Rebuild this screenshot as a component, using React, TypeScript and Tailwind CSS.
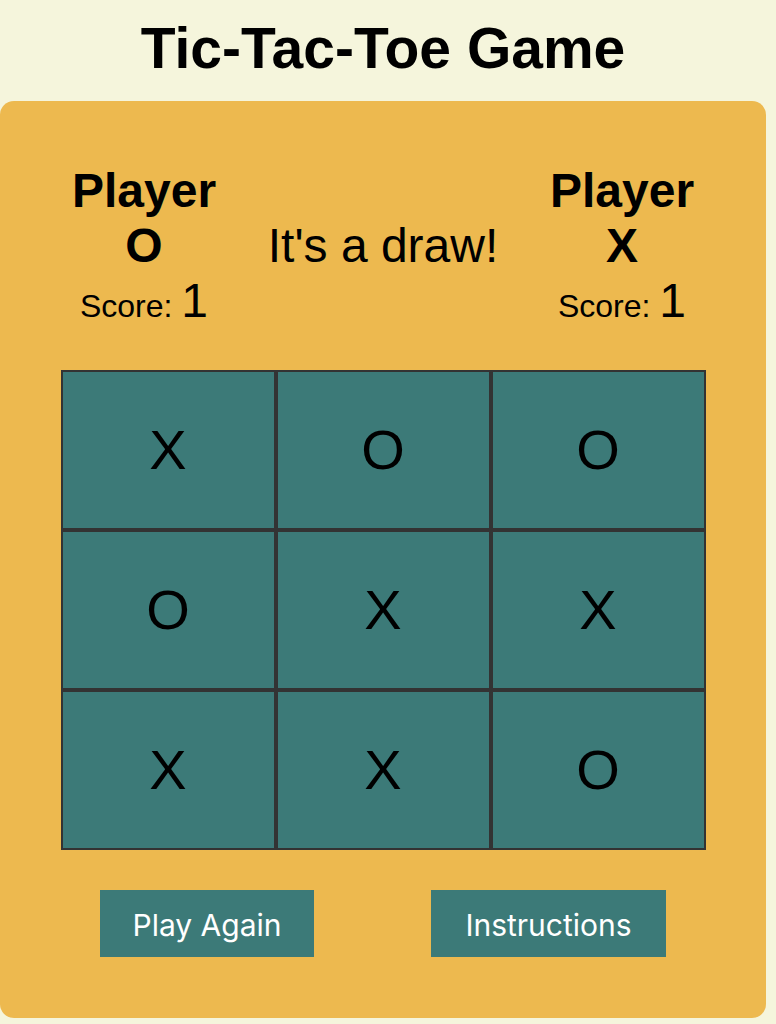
export default function App() {
  const board = ["X", "O", "O", "O", "X", "X", "X", "X", "O"];

  return (
    <div className="min-h-[1024px] w-full bg-[#f5f5dc] font-['Liberation_Sans',Arial,sans-serif] text-black">
      <div className="w-[766px] pt-[16px]">
        <h1 className="text-center text-[57px] font-bold leading-[64px]">Tic-Tac-Toe Game</h1>

        <div className="mt-[21px] rounded-[14px] bg-[#edb94f] pt-[62px] pb-[61px]">
          {/* Score header */}
          <div className="flex items-center px-[54px]">
            <div className="w-[180px] text-center">
              <h2 className="text-[48px] font-bold leading-[55px]">Player O</h2>
              <div className="text-[48px] leading-[55px]">
                <span className="text-[32px] leading-none">Score: </span>1
              </div>
            </div>
            <div className="flex-1 text-center text-[48px] leading-[55px]">It's a draw!</div>
            <div className="w-[180px] text-center">
              <h2 className="text-[48px] font-bold leading-[55px]">Player X</h2>
              <div className="text-[48px] leading-[55px]">
                <span className="text-[32px] leading-none">Score: </span>1
              </div>
            </div>
          </div>

          {/* Board */}
          <div className="mx-auto mt-[42px] grid w-[645px] grid-cols-3">
            {board.map((v, i) => (
              <div
                key={i}
                className="flex h-[160px] items-center justify-center border-2 border-[#333333] bg-[#3c7a78] text-[56px] leading-none"
              >
                {v}
              </div>
            ))}
          </div>

          {/* Actions */}
          <div className="mt-[40px] flex justify-center gap-[117px] font-['Inter',sans-serif]">
            <button className="h-[67px] w-[214px] bg-[#3c7a78] pt-[3px] text-[30px] text-white">Play Again</button>
            <button className="h-[67px] w-[235px] bg-[#3c7a78] pt-[3px] text-[30px] text-white">Instructions</button>
          </div>
        </div>
      </div>
    </div>
  );
}
